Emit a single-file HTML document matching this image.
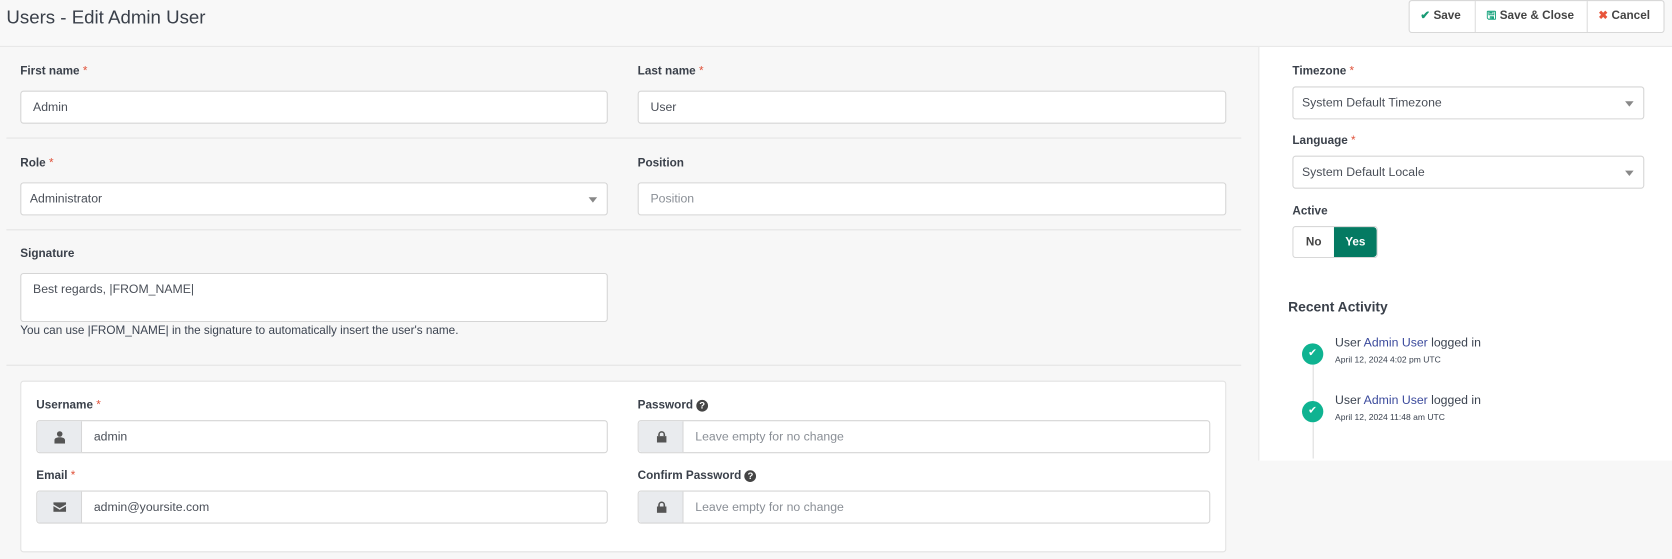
<!DOCTYPE html>
<html><head><meta charset="utf-8"><style>
*{box-sizing:border-box;margin:0;padding:0}
body{width:1672px;height:559px;overflow:hidden;background:#f7f7f7;font-family:"Liberation Sans",sans-serif;color:#3b4350;font-size:11.5px}
#w{position:absolute;left:0;top:0;width:1568px;height:524px;transform:scale(1.06633);transform-origin:0 0}
.a{position:absolute}
.hdr{left:0;top:0;width:1568px;height:44px;background:#f8f8f8;border-bottom:1px solid #e6e6e6}
.title{left:6px;top:6px;font-size:17.5px;color:#3a404a}
.btns{left:1320px;top:0;height:31px;border:1px solid #d8d8d8;border-radius:3px;background:#fff;display:flex}
.btns div{padding:0 10px;line-height:29px;font-weight:bold;font-size:11px;color:#444;border-right:1px solid #ddd;white-space:nowrap}
.btns div:last-child{border-right:none}
.lbl{font-weight:bold;font-size:11px;color:#3a404a}
.req{color:#e0533b;font-weight:normal}
.inp{height:31px;border:1px solid #d5d5d5;border-radius:3px;background:#fff;padding-left:8px;line-height:31px;font-size:11.5px;color:#4a4f58}
.ph{color:#8a8f96}
.hr{height:1px;background:#e4e4e4}
.caret{position:absolute;right:9px;top:13px;border-left:4px solid transparent;border-right:4px solid transparent;border-top:5px solid #888}
.addon{position:absolute;left:0;top:0;bottom:0;width:42px;background:#e9ebee;border-right:1px solid #d5d5d5;border-radius:3px 0 0 3px}
.grp{padding-left:53px}
a{color:#3b4a9c;text-decoration:none}
</style></head><body><div id="w">
<div class="a hdr"></div>
<div class="a title">Users - Edit Admin User</div>
<div class="a btns" style="left:1321px;width:240px">
<div style="width:62px"><span style="color:#179a74">✔</span> Save</div>
<div style="width:105px"><span style="color:#1aa57f">🖫</span> Save &amp; Close</div>
<div style="flex:1"><span style="color:#e8553b">✖</span> Cancel</div>
</div>

<div class="a lbl" style="left:19px;top:61px">First name <span class="req">*</span></div>
<div class="a inp" style="left:19px;top:85px;width:551px;padding-left:11px">Admin</div>
<div class="a lbl" style="left:598px;top:61px">Last name <span class="req">*</span></div>
<div class="a inp" style="left:598px;top:85px;width:552px;padding-left:11px">User</div>
<div class="a hr" style="left:6px;top:129px;width:1158px"></div>

<div class="a lbl" style="left:19px;top:147px">Role <span class="req">*</span></div>
<div class="a inp" style="left:19px;top:171px;width:551px">Administrator<span class="caret"></span></div>
<div class="a lbl" style="left:598px;top:147px">Position</div>
<div class="a inp ph" style="left:598px;top:171px;width:552px;padding-left:11px">Position</div>
<div class="a hr" style="left:6px;top:215px;width:1158px"></div>

<div class="a lbl" style="left:19px;top:232px">Signature</div>
<div class="a inp" style="left:19px;top:256px;width:551px;height:46px;line-height:30px;padding-left:11px">Best regards, |FROM_NAME|</div>
<div class="a" style="left:19px;top:304px;font-size:11px">You can use |FROM_NAME| in the signature to automatically insert the user's name.</div>
<div class="a hr" style="left:6px;top:342px;width:1158px"></div>

<div class="a" style="left:19px;top:357px;width:1131px;height:161px;background:#fff;border:1px solid #e2e2e2;border-radius:3px"></div>
<div class="a lbl" style="left:34px;top:374px">Username <span class="req">*</span></div>
<div class="a inp grp" style="left:34px;top:394px;width:536px"><span class="addon"><svg style="position:absolute;left:16px;top:9px" width="10" height="12" viewBox="0 0 10 12"><circle cx="5" cy="3" r="2.6" fill="#555"/><path d="M0 12v-3c0-2 2-3 5-3s5 1 5 3v3z" fill="#555"/></svg></span>admin</div>
<div class="a lbl" style="left:34px;top:440px">Email <span class="req">*</span></div>
<div class="a inp grp" style="left:34px;top:460px;width:536px"><span class="addon"><svg style="position:absolute;left:15px;top:10px" width="12" height="9" viewBox="0 0 12 9"><path d="M0 0h12v2l-6 3.5L0 2z M0 3.5l6 3.5 6-3.5V9H0z" fill="#555"/></svg></span>admin@yoursite.com</div>
<div class="a lbl" style="left:598px;top:374px">Password <span style="display:inline-block;width:11px;height:11px;border-radius:50%;background:#444;color:#fff;font-size:9px;text-align:center;line-height:11px">?</span></div>
<div class="a inp grp ph" style="left:598px;top:394px;width:537px"><span class="addon"><svg style="position:absolute;left:17px;top:9px" width="9" height="11" viewBox="0 0 9 11"><path d="M2 5V3.5a2.5 2.5 0 0 1 5 0V5" stroke="#555" stroke-width="1.5" fill="none"/><rect x="0" y="5" width="9" height="6" fill="#555"/></svg></span>Leave empty for no change</div>
<div class="a lbl" style="left:598px;top:440px">Confirm Password <span style="display:inline-block;width:11px;height:11px;border-radius:50%;background:#444;color:#fff;font-size:9px;text-align:center;line-height:11px">?</span></div>
<div class="a inp grp ph" style="left:598px;top:460px;width:537px"><span class="addon"><svg style="position:absolute;left:17px;top:9px" width="9" height="11" viewBox="0 0 9 11"><path d="M2 5V3.5a2.5 2.5 0 0 1 5 0V5" stroke="#555" stroke-width="1.5" fill="none"/><rect x="0" y="5" width="9" height="6" fill="#555"/></svg></span>Leave empty for no change</div>

<div class="a" style="left:1180px;top:44px;width:388px;height:388px;background:#fff;border-left:1px solid #e6e6e6"></div>
<div class="a lbl" style="left:1212px;top:61px">Timezone <span class="req">*</span></div>
<div class="a inp" style="left:1212px;top:81px;width:330px">System Default Timezone<span class="caret"></span></div>
<div class="a lbl" style="left:1212px;top:126px">Language <span class="req">*</span></div>
<div class="a inp" style="left:1212px;top:146px;width:330px">System Default Locale<span class="caret"></span></div>
<div class="a lbl" style="left:1212px;top:192px">Active</div>
<div class="a" style="left:1212px;top:212px;width:80px;height:30px;border:1px solid #d8d8d8;border-radius:3px;display:flex;font-weight:bold;font-size:11px">
<div style="width:38px;text-align:center;line-height:28px;color:#444">No</div>
<div style="flex:1;background:#047a62;color:#fff;text-align:center;line-height:28px;border-radius:0 3px 3px 0">Yes</div></div>
<div class="a" style="left:1208px;top:280px;font-size:13px;font-weight:bold;color:#3a404a">Recent Activity</div>
<div class="a" style="left:1231px;top:340px;width:1px;height:90px;background:#ddd"></div>
<div class="a" style="left:1221px;top:322px;width:20px;height:20px;border-radius:50%;background:#0fb391;color:#fff;font-size:10px;text-align:center;line-height:20px">✔</div>
<div class="a" style="left:1221px;top:376px;width:20px;height:20px;border-radius:50%;background:#0fb391;color:#fff;font-size:10px;text-align:center;line-height:20px">✔</div>
<div class="a" style="left:1252px;top:316px;font-size:11.5px">User <a>Admin User</a> logged in</div>
<div class="a" style="left:1252px;top:333px;font-size:8px">April 12, 2024 4:02 pm UTC</div>
<div class="a" style="left:1252px;top:370px;font-size:11.5px">User <a>Admin User</a> logged in</div>
<div class="a" style="left:1252px;top:387px;font-size:8px">April 12, 2024 11:48 am UTC</div>
</div></body></html>
